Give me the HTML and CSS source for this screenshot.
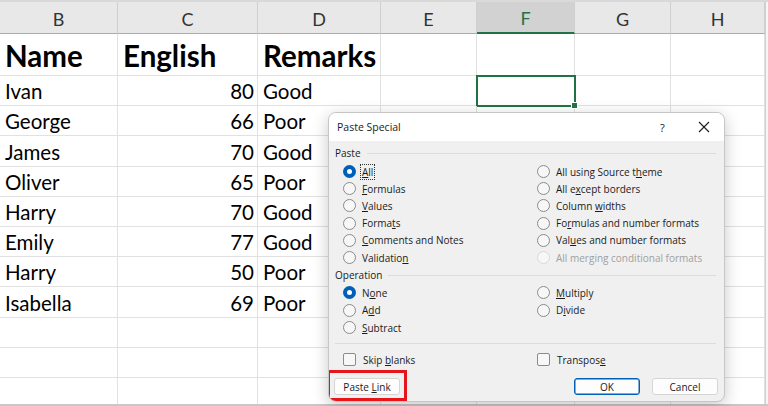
FILE: index.html
```html
<!DOCTYPE html>
<html>
<head>
<meta charset="utf-8">
<link rel="stylesheet" href="styles.css">
</head>
<body>
<div class="sheet">
  <div class="grid">
    <div class="hd">B</div><div class="hd">C</div><div class="hd">D</div><div class="hd">E</div><div class="hd sel">F</div><div class="hd">G</div><div class="hd">H</div>

    <div class="c big">Name</div><div class="c big">English</div><div class="c big">Remarks</div><div class="c"></div><div class="c"></div><div class="c"></div><div class="c"></div>

    <div class="c">Ivan</div><div class="c num">80</div><div class="c">Good</div><div class="c"></div><div class="c active"><span class="handle"></span></div><div class="c"></div><div class="c"></div>
    <div class="c">George</div><div class="c num">66</div><div class="c">Poor</div><div class="c"></div><div class="c"></div><div class="c"></div><div class="c"></div>
    <div class="c">James</div><div class="c num">70</div><div class="c">Good</div><div class="c"></div><div class="c"></div><div class="c"></div><div class="c"></div>
    <div class="c">Oliver</div><div class="c num">65</div><div class="c">Poor</div><div class="c"></div><div class="c"></div><div class="c"></div><div class="c"></div>
    <div class="c">Harry</div><div class="c num">70</div><div class="c">Good</div><div class="c"></div><div class="c"></div><div class="c"></div><div class="c"></div>
    <div class="c">Emily</div><div class="c num">77</div><div class="c">Good</div><div class="c"></div><div class="c"></div><div class="c"></div><div class="c"></div>
    <div class="c">Harry</div><div class="c num">50</div><div class="c">Poor</div><div class="c"></div><div class="c"></div><div class="c"></div><div class="c"></div>
    <div class="c">Isabella</div><div class="c num">69</div><div class="c">Poor</div><div class="c"></div><div class="c"></div><div class="c"></div><div class="c"></div>
    <div class="c"></div><div class="c"></div><div class="c"></div><div class="c"></div><div class="c"></div><div class="c"></div><div class="c"></div>
    <div class="c"></div><div class="c"></div><div class="c"></div><div class="c"></div><div class="c"></div><div class="c"></div><div class="c"></div>
    <div class="c"></div><div class="c"></div><div class="c"></div><div class="c"></div><div class="c"></div><div class="c"></div><div class="c"></div>
  </div>
</div>

<div class="dialog">
  <div class="titlebar">
    <span class="title">Paste Special</span>
    <span class="help">?</span>
    <svg class="close" width="12" height="12" viewBox="0 0 12 12"><path d="M1 1 L11 11 M11 1 L1 11" stroke="#1a1a1a" stroke-width="1.1" fill="none"/></svg>
  </div>
  <div class="body">
    <div class="section"><span>Paste</span><i></i></div>
    <div class="opts paste">
      <label class="opt"><span class="radio on"></span><span class="focus"><u>A</u>ll</span></label>
      <label class="opt"><span class="radio"></span><span>All using Source t<u>h</u>eme</span></label>
      <label class="opt"><span class="radio"></span><span><u>F</u>ormulas</span></label>
      <label class="opt"><span class="radio"></span><span>All e<u>x</u>cept borders</span></label>
      <label class="opt"><span class="radio"></span><span><u>V</u>alues</span></label>
      <label class="opt"><span class="radio"></span><span>Column <u>w</u>idths</span></label>
      <label class="opt"><span class="radio"></span><span>Forma<u>t</u>s</span></label>
      <label class="opt"><span class="radio"></span><span>Fo<u>r</u>mulas and number formats</span></label>
      <label class="opt"><span class="radio"></span><span><u>C</u>omments and Notes</span></label>
      <label class="opt"><span class="radio"></span><span>Val<u>u</u>es and number formats</span></label>
      <label class="opt"><span class="radio"></span><span>Validatio<u>n</u></span></label>
      <label class="opt dis"><span class="radio"></span><span>All mer<u>g</u>ing conditional formats</span></label>
    </div>
    <div class="section op"><span>Operation</span><i></i></div>
    <div class="opts oper">
      <label class="opt"><span class="radio on"></span><span>N<u>o</u>ne</span></label>
      <label class="opt"><span class="radio"></span><span><u>M</u>ultiply</span></label>
      <label class="opt"><span class="radio"></span><span>A<u>d</u>d</span></label>
      <label class="opt"><span class="radio"></span><span>D<u>i</u>vide</span></label>
      <label class="opt"><span class="radio"></span><span><u>S</u>ubtract</span></label>
      <span></span>
    </div>
    <div class="sep"></div>
    <div class="opts checks">
      <label class="opt"><span class="check"></span><span>Skip <u>b</u>lanks</span></label>
      <label class="opt"><span class="check"></span><span>Transpos<u>e</u></span></label>
    </div>
    <div class="buttons">
      <div class="linkwrap"><button class="btn">Paste <u>L</u>ink</button></div>
      <div class="right">
        <button class="btn ok">OK</button>
        <button class="btn">Cancel</button>
      </div>
    </div>
  </div>
</div>
</body>
</html>
```

FILE: styles.css
```css
html, body {
  margin: 0;
  padding: 0;
  background: #ffffff;
  width: 768px;
  height: 406px;
  overflow: hidden;
}

.sheet {
  border-top: 2px solid #d9d9d9;
  height: 402px;
  border-bottom: 2px solid #c8c8c8;
  overflow: hidden;
  width: 768px;
  background: #f6f6f6;
}

.grid {
  display: grid;
  grid-template-columns: 118px 140px 123px 96px 98px 96px 94px;
  grid-template-rows: 32px 42px repeat(11, 30.2px);
  width: 765px;
  background: #fff;
  border-right: 1px solid #d0d0d0;
  font-family: Lato, "Open Sans", sans-serif;
  color: #000;
}

.hd {
  background: #e8e8e8;
  border-right: 1px solid #cfcfcf;
  border-bottom: 1px solid #aaaaaa;
  font-size: 18px;
  color: #333;
  display: flex;
  align-items: center;
  justify-content: center;
  padding-top: 2px;
  box-sizing: border-box;
}

.hd.sel {
  background: #d2d2d2;
  border-bottom: 2px solid #217346;
  color: #217346;
}

.c {
  border-right: 1px solid #e1e1e1;
  border-bottom: 1px solid #e1e1e1;
  font-size: 20.5px;
  display: flex;
  align-items: flex-end;
  padding: 0 3px 2px 5px;
  box-sizing: border-box;
  white-space: nowrap;
  position: relative;
}

.c.big {
  font-weight: bold;
  font-size: 29.5px;
  padding-bottom: 2px;
}

.c.num {
  justify-content: flex-end;
}

.c.active {
  outline: 2px solid #217346;
  outline-offset: -1px;
}

.handle {
  position: absolute;
  right: -4px;
  bottom: -4px;
  width: 5px;
  height: 5px;
  background: #217346;
  border: 1px solid #fff;
  z-index: 2;
}

/* Dialog */
.dialog {
  position: absolute;
  left: 328px;
  top: 112px;
  width: 397px;
  height: 290px;
  background: #f0f0f0;
  border: 1px solid #c6c6c6;
  border-radius: 8px;
  box-shadow: 0 4px 16px rgba(0, 0, 0, 0.22);
  font-family: "Open Sans", "Noto Sans", sans-serif;
  font-size: 10px;
  color: #1b1b1b;
  box-sizing: border-box;
  overflow: hidden;
}

.titlebar {
  height: 28px;
  background: #ffffff;
  display: flex;
  align-items: center;
  padding: 0 0 0 8px;
}

.title {
  flex: 1;
  font-size: 10.5px;
}

.help {
  width: 14px;
  font-size: 11px;
  margin-right: 24px;
}

.close {
  margin-right: 14px;
}

.body {
  padding: 4px 6px 0 6px;
}

.section {
  display: flex;
  align-items: center;
  height: 16px;
}

.section span {
  padding-right: 6px;
}

.section i {
  flex: 1;
  border-top: 1px solid #dcdcdc;
  margin-right: 2px;
}

.section.op {
  margin-top: 1px;
}

.opts {
  display: grid;
  grid-template-columns: 194px 1fr;
  padding-left: 8px;
}

.paste {
  grid-auto-rows: 17.2px;
  margin-top: 2px;
}

.oper {
  grid-auto-rows: 17.4px;
  margin-top: 1px;
}

.opt {
  display: flex;
  align-items: center;
  white-space: nowrap;
}

.radio {
  width: 11px;
  height: 11px;
  border: 1px solid #8b8b8b;
  border-radius: 50%;
  background: #f7f7f7;
  margin-right: 6px;
  flex: none;
  box-sizing: content-box;
}

.radio.on {
  background: #fff;
  border: 4px solid #005fb8;
  width: 5px;
  height: 5px;
}

.opt.dis {
  color: #a0a0a0;
}

.opt.dis .radio {
  border-color: #d8d8d8;
}

.focus {
  outline: 1px dotted #333;
  outline-offset: 0;
  padding: 0 1px;
  margin-left: -1px;
}

.sep {
  border-top: 1px solid #dcdcdc;
  margin: 7px 2px 0 0;
}

.checks {
  grid-auto-rows: 17px;
  margin-top: 7px;
}

.check {
  width: 11px;
  height: 11px;
  border: 1px solid #8b8b8b;
  border-radius: 2px;
  background: #f7f7f7;
  margin-right: 7px;
  flex: none;
}

.buttons {
  display: flex;
  justify-content: space-between;
  align-items: center;
  margin-top: 2px;
}

.linkwrap {
  border: 3px solid #e8141b;
  padding: 5px 4px 3px 4px;
  margin-left: -8px;
}

.btn {
  font-family: "Open Sans", "Noto Sans", sans-serif;
  font-size: 10px;
  color: #1b1b1b;
  height: 17px;
  padding: 0;
  width: 66px;
  background: #fdfdfd;
  border: 1px solid #d5d5d5;
  border-radius: 3px;
  line-height: 14px;
}

.right {
  display: flex;
  gap: 12px;
  margin-right: 0;
  padding-top: 2px;
}

.btn.ok {
  border: 1px solid #005fb8;
  box-shadow: inset 0 0 0 0.5px #005fb8;
}
```
